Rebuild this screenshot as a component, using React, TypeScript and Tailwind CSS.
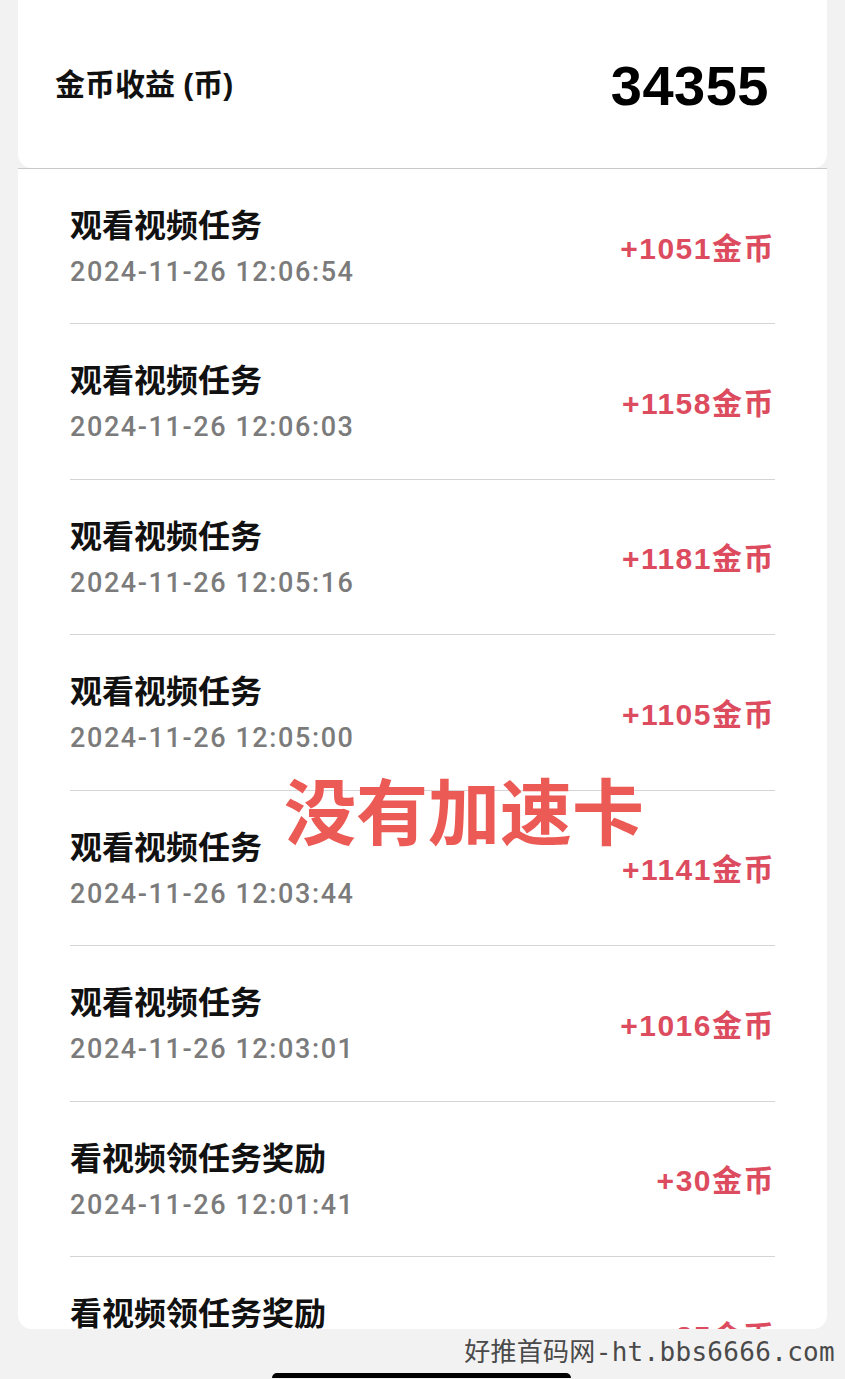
import { useState } from 'react'

interface Record {
  title: string
  time: string
  coins: number
}

const records: Record[] = [
  { title: '观看视频任务', time: '2024-11-26 12:06:54', coins: 1051 },
  { title: '观看视频任务', time: '2024-11-26 12:06:03', coins: 1158 },
  { title: '观看视频任务', time: '2024-11-26 12:05:16', coins: 1181 },
  { title: '观看视频任务', time: '2024-11-26 12:05:00', coins: 1105 },
  { title: '观看视频任务', time: '2024-11-26 12:03:44', coins: 1141 },
  { title: '观看视频任务', time: '2024-11-26 12:03:01', coins: 1016 },
  { title: '看视频领任务奖励', time: '2024-11-26 12:01:41', coins: 30 },
  { title: '看视频领任务奖励', time: '2024-11-26 12:00:58', coins: 25 },
]

const App = () => {
  const [total] = useState(34355)

  return (
    <div
      className="relative w-[845px] h-[1379px] overflow-hidden bg-[#f2f2f2]"
      style={{ fontFamily: '"Liberation Sans","Noto Sans CJK SC",sans-serif' }}
    >
      {/* summary card */}
      <div className="mx-[18px] h-[168px] bg-white rounded-b-[14px] flex items-center justify-between pl-[37px] pr-[58px]">
        <span className="text-[30px] font-semibold text-[#111]">
          金币收益 (币)
        </span>
        <span className="text-[56px] font-bold text-black pt-1 tracking-[0.5px]">{total}</span>
      </div>

      <div className="mx-[18px] h-px bg-[#c9c9c9]" />

      {/* records */}
      <div className="mx-[18px] h-[1160px] bg-white rounded-b-[14px] overflow-hidden px-[52px]">
        {records.map((r, i) => (
          <div
            key={i}
            className={`flex items-center justify-between border-b border-[#d4d4d4] ${
              i === 0 ? 'h-[155px]' : 'h-[155.5px]'
            }`}
          >
            <div className="flex flex-col gap-[12px] pt-[4px]">
              <span className="text-[32px] leading-[36px] font-semibold text-[#111]">
                {r.title}
              </span>
              <span
                className="text-[27px] leading-[32px] font-medium text-[#7b7b7b] tracking-[1.6px]"
                style={{ fontFamily: 'Roboto,"Liberation Sans",sans-serif' }}
              >
                {r.time}
              </span>
            </div>
            <span className="text-[30px] font-semibold text-[#dc4b5e] tracking-[1.5px] pt-[4px]">
              +{r.coins}金币
            </span>
          </div>
        ))}
      </div>

      {/* watermark */}
      <div className="h-[44px] flex items-center justify-end pr-[10px]">
        <span
          className="text-[26px] text-[#4a4a4a] tracking-[0.3px]"
          style={{ fontFamily: '"DejaVu Sans Mono","Noto Sans CJK SC",monospace' }}
        >
          <span style={{ fontFamily: '"Noto Sans CJK SC",sans-serif' }}>好推首码网</span>-ht.bbs6666.com
        </span>
      </div>
      <div className="ml-[272px] w-[299px] h-[5px] rounded-t-full bg-black" />

      {/* stamp over the list */}
      <div
        className="absolute left-[284px] top-[772px] text-[72px] leading-none font-bold text-[#ec5a55]"
        style={{ fontFamily: '"Noto Sans CJK SC",sans-serif' }}
      >
        没有加速卡
      </div>
    </div>
  )
}

export default App
